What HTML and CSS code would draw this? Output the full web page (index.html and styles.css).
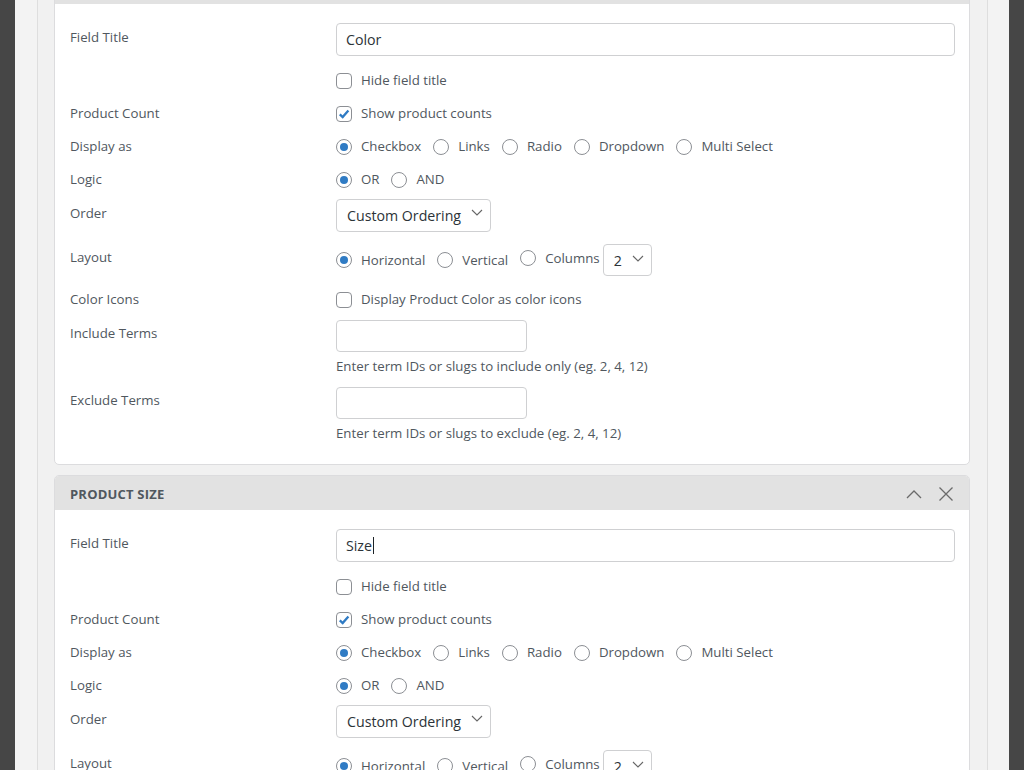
FILE: index.html
```html
<!DOCTYPE html>
<html>
<head>
<meta charset="utf-8">
<link rel="stylesheet" href="styles.css">
</head>
<body>
<div class="screen">
  <div class="modal">
    <div class="wrap">

      <section class="card card-first">
        <header class="card-head"></header>
        <div class="card-body">
          <div class="row r-first">
            <div class="lbl lbl-pad">Field Title</div>
            <div class="ctl"><div class="text-input wide">Color</div></div>
          </div>
          <div class="row">
            <div class="lbl"></div>
            <div class="ctl"><span class="cb"></span><span class="opt">Hide field title</span></div>
          </div>
          <div class="row">
            <div class="lbl">Product Count</div>
            <div class="ctl"><span class="cb on"><svg viewBox="0 0 16 16" width="16" height="16"><path d="M3.8 8.3 L6.7 11.1 L12.4 4.6" fill="none" stroke="#2f7bc4" stroke-width="2.3"/></svg></span><span class="opt">Show product counts</span></div>
          </div>
          <div class="row">
            <div class="lbl">Display as</div>
            <div class="ctl">
              <span class="rd on"></span><span class="opt">Checkbox</span>
              <span class="rd"></span><span class="opt">Links</span>
              <span class="rd"></span><span class="opt">Radio</span>
              <span class="rd"></span><span class="opt">Dropdown</span>
              <span class="rd"></span><span class="opt">Multi Select</span>
            </div>
          </div>
          <div class="row">
            <div class="lbl">Logic</div>
            <div class="ctl">
              <span class="rd on"></span><span class="opt">OR</span>
              <span class="rd"></span><span class="opt">AND</span>
            </div>
          </div>
          <div class="row r-order">
            <div class="lbl lbl-pad">Order</div>
            <div class="ctl"><div class="select sel-order"><span>Custom Ordering</span><svg viewBox="0 0 12 7" width="12" height="7"><path d="M1 1 L6 6 L11 1" fill="none" stroke="#666" stroke-width="1.1"/></svg></div></div>
          </div>
          <div class="row r-layout">
            <div class="lbl lbl-pad-s">Layout</div>
            <div class="ctl ctl-tall">
              <span class="rd on"></span><span class="opt">Horizontal</span>
              <span class="rd"></span><span class="opt">Vertical</span>
              <span class="rd up"></span><span class="opt up opt-cols">Columns</span>
              <div class="select sel-cols"><span>2</span><svg viewBox="0 0 12 7" width="12" height="7"><path d="M1 1 L6 6 L11 1" fill="none" stroke="#666" stroke-width="1.1"/></svg></div>
            </div>
          </div>
          <div class="row">
            <div class="lbl">Color Icons</div>
            <div class="ctl"><span class="cb"></span><span class="opt">Display Product Color as color icons</span></div>
          </div>
          <div class="row r-terms">
            <div class="lbl lbl-pad-s">Include Terms</div>
            <div class="ctl-col">
              <div class="text-input short"></div>
              <div class="desc">Enter term IDs or slugs to include only (eg. 2, 4, 12)</div>
            </div>
          </div>
          <div class="row r-terms">
            <div class="lbl lbl-pad-s">Exclude Terms</div>
            <div class="ctl-col">
              <div class="text-input short"></div>
              <div class="desc">Enter term IDs or slugs to exclude (eg. 2, 4, 12)</div>
            </div>
          </div>
        </div>
      </section>

      <section class="card">
        <header class="card-head">
          <span class="head-title">PRODUCT SIZE</span>
          <span class="head-icons">
            <svg viewBox="0 0 16 10" width="16" height="10"><path d="M1 9 L8 2 L15 9" fill="none" stroke="#6b6b6b" stroke-width="1.3"/></svg>
            <svg viewBox="0 0 16 16" width="16" height="16"><path d="M1.5 1.5 L14.5 14.5 M14.5 1.5 L1.5 14.5" fill="none" stroke="#6b6b6b" stroke-width="1.3"/></svg>
          </span>
        </header>
        <div class="card-body">
          <div class="row r-first">
            <div class="lbl lbl-pad">Field Title</div>
            <div class="ctl"><div class="text-input wide">Size<span class="caret"></span></div></div>
          </div>
          <div class="row">
            <div class="lbl"></div>
            <div class="ctl"><span class="cb"></span><span class="opt">Hide field title</span></div>
          </div>
          <div class="row">
            <div class="lbl">Product Count</div>
            <div class="ctl"><span class="cb on"><svg viewBox="0 0 16 16" width="16" height="16"><path d="M3.8 8.3 L6.7 11.1 L12.4 4.6" fill="none" stroke="#2f7bc4" stroke-width="2.3"/></svg></span><span class="opt">Show product counts</span></div>
          </div>
          <div class="row">
            <div class="lbl">Display as</div>
            <div class="ctl">
              <span class="rd on"></span><span class="opt">Checkbox</span>
              <span class="rd"></span><span class="opt">Links</span>
              <span class="rd"></span><span class="opt">Radio</span>
              <span class="rd"></span><span class="opt">Dropdown</span>
              <span class="rd"></span><span class="opt">Multi Select</span>
            </div>
          </div>
          <div class="row">
            <div class="lbl">Logic</div>
            <div class="ctl">
              <span class="rd on"></span><span class="opt">OR</span>
              <span class="rd"></span><span class="opt">AND</span>
            </div>
          </div>
          <div class="row r-order">
            <div class="lbl lbl-pad">Order</div>
            <div class="ctl"><div class="select sel-order"><span>Custom Ordering</span><svg viewBox="0 0 12 7" width="12" height="7"><path d="M1 1 L6 6 L11 1" fill="none" stroke="#666" stroke-width="1.1"/></svg></div></div>
          </div>
          <div class="row r-layout">
            <div class="lbl lbl-pad-s">Layout</div>
            <div class="ctl ctl-tall">
              <span class="rd on"></span><span class="opt">Horizontal</span>
              <span class="rd"></span><span class="opt">Vertical</span>
              <span class="rd up"></span><span class="opt up opt-cols">Columns</span>
              <div class="select sel-cols"><span>2</span><svg viewBox="0 0 12 7" width="12" height="7"><path d="M1 1 L6 6 L11 1" fill="none" stroke="#666" stroke-width="1.1"/></svg></div>
            </div>
          </div>
        </div>
      </section>

    </div>
  </div>
</div>
</body>
</html>
```

FILE: styles.css
```css
* { box-sizing: border-box; }

html, body {
  margin: 0;
  padding: 0;
  height: 770px;
  overflow: hidden;
  background: #464646;
  font-family: "Open Sans", "Noto Sans", sans-serif;
  font-size: 13.25px;
  color: #50575e;
}

.screen {
  height: 770px;
  padding: 0 15px 0 15px;
  overflow: hidden;
}

.modal {
  width: 994px;
  height: 770px;
  background: #f3f3f3;
  padding: 0 21px 0 22px;
  overflow: hidden;
}

.wrap {
  height: 770px;
  background: #f1f1f1;
  border-left: 1px solid #dedede;
  border-right: 1px solid #dedede;
  padding: 0 17px 0 16px;
  overflow: hidden;
}

.card {
  background: #fff;
  border: 1px solid #dcdcde;
  border-radius: 5px;
  margin-bottom: 10px;
  overflow: hidden;
}

.card-first {
  margin-top: -31px;
}

.card-head {
  height: 34px;
  background: #e2e2e2;
  display: flex;
  align-items: center;
  justify-content: space-between;
  padding: 2px 15px 0 15px;
}

.head-title {
  font-weight: 700;
  font-size: 13px;
  color: #50575e;
  letter-spacing: 0.2px;
}

.head-icons {
  display: flex;
  align-items: center;
  gap: 16px;
}

.head-icons svg { display: block; }

.card-body {
  padding: 15px 14px 14px 15px;
}

.row {
  display: grid;
  grid-template-columns: 266px 1fr;
  align-items: start;
  padding: 8px 0;
}

.r-first { padding: 4px 0 8px; }
.r-order { padding: 3px 0 8px; }
.r-layout { padding: 4px 0 7px; }
.r-terms { padding: 4px 0 8px; }

.lbl {
  line-height: 17px;
  color: #50575e;
}

.lbl-pad { padding-top: 5.5px; }
.lbl-pad-s { padding-top: 4.5px; }

.ctl {
  display: flex;
  align-items: center;
  line-height: 17px;
  min-height: 17px;
}

.ctl-tall { height: 32px; }

.ctl-col {
  display: flex;
  flex-direction: column;
  align-items: flex-start;
}

.opt {
  color: #50575e;
  margin-right: 12px;
  white-space: nowrap;
}

.opt-cols { margin-right: 3px; }

.up { position: relative; top: -2px; }

.cb, .rd {
  width: 16px;
  height: 16px;
  flex: 0 0 16px;
  border: 1px solid #8c8f94;
  background: #fff;
  margin-right: 9px;
  position: relative;
}

.cb { border-radius: 4px; }
.cb svg { position: absolute; left: -1px; top: -1px; }

.rd { border-radius: 50%; }
.rd.on::after {
  content: "";
  position: absolute;
  left: 3px;
  top: 3px;
  width: 8px;
  height: 8px;
  border-radius: 50%;
  background: #2f7bc4;
}

.text-input {
  height: 33px;
  border: 1px solid #cfd0d2;
  border-radius: 4px;
  background: #fff;
  font-size: 14.2px;
  color: #2c3338;
  padding: 0 9px;
  display: flex;
  align-items: center;
}

.text-input.wide { width: 619px; }
.text-input.short { width: 191px; height: 32px; }

.caret {
  display: inline-block;
  width: 1px;
  height: 17px;
  background: #1d2327;
  margin-left: 1px;
}

.desc {
  margin-top: 6px;
  line-height: 17px;
  color: #50575e;
}

.select {
  border: 1px solid #cfd0d2;
  border-radius: 4px;
  background: #fff;
  font-size: 14.2px;
  color: #2c3338;
  display: flex;
  align-items: center;
  justify-content: space-between;
}

.select svg { display: block; }

.sel-order {
  width: 155px;
  height: 33px;
  padding: 0 7px 0 10px;
}

.sel-order svg { position: relative; top: -3px; }

.sel-cols {
  width: 49px;
  height: 32px;
  padding: 0 7px 0 10px;
}

.sel-cols svg { position: relative; top: -2px; }
```
